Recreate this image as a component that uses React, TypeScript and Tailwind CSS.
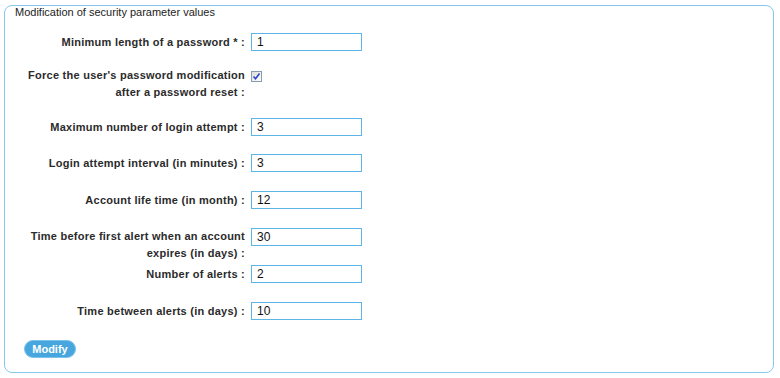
import React, { useState } from 'react';

interface Field {
  label: React.ReactNode;
  value: string;
  mt: string;
}

const font = { fontFamily: '"Liberation Sans", Arial, sans-serif' };

function CheckMark({ checked, onClick }: { checked: boolean; onClick: () => void }) {
  return (
    <button type="button" onClick={onClick} className="mt-[4px] h-[11px] w-[11px] p-0 leading-none">
      <svg width="11" height="11" viewBox="0 0 11 11">
        <defs>
          <linearGradient id="cb" x1="0" y1="0" x2="1" y2="1">
            <stop offset="0" stopColor="#dcdcd6" />
            <stop offset="1" stopColor="#ffffff" />
          </linearGradient>
        </defs>
        <rect x="0.5" y="0.5" width="10" height="10" fill="url(#cb)" stroke="#8a9bb8" />
        {checked && <path d="M2.5 5.5 L4.5 7.8 L8.5 2.5" fill="none" stroke="#2a45c8" strokeWidth="1.6" />}
      </svg>
    </button>
  );
}

export default function App() {
  const [forceReset, setForceReset] = useState(true);
  const [values, setValues] = useState<{ [key: number]: string }>({});

  const fields: Field[] = [
    { label: 'Maximum number of login attempt :', value: '3', mt: 'mt-[17px]' },
    { label: 'Login attempt interval (in minutes) :', value: '3', mt: 'mt-[18px]' },
    { label: 'Account life time (in month) :', value: '12', mt: 'mt-[19px]' },
    {
      label: (
        <>
          Time before first alert when an account
          <br />
          expires (in days) :
        </>
      ),
      value: '30',
      mt: 'mt-[19px]',
    },
    { label: 'Number of alerts :', value: '2', mt: 'mt-[3px]' },
    { label: 'Time between alerts (in days) :', value: '10', mt: 'mt-[19px]' },
  ];

  const inputCls =
    'h-[18px] w-[111px] border border-[#5db6e6] bg-white px-[5px] text-[12px] text-[#111] outline-none';
  const labelCls = 'w-[240px] shrink-0 text-right text-[11px] font-bold tracking-[0.25px] text-[#2b2b2b]';

  return (
    <div className="h-[378px] w-[780px] bg-white" style={font}>
      <div className="ml-[4px] pt-[5px]">
        <div className="flex h-[368px] w-[770px] flex-col rounded-[8px] border border-[#86c7ec]">
          {/* Title */}
          <div className="ml-[10px] text-[11px] leading-[13px] text-[#222]">Modification of security parameter values</div>

          {/* Minimum length */}
          <div className="mt-[14px] flex items-start gap-[6px]">
            <div className={`${labelCls} leading-[18px]`}>Minimum length of a password * :</div>
            <input
              className={inputCls}
              value={values[-1] ?? '1'}
              onChange={(e) => setValues((prev) => ({ ...prev, [-1]: e.target.value }))}
            />
          </div>

          {/* Force reset */}
          <div className="mt-[16px] flex items-start gap-[6px]">
            <div className={`${labelCls} leading-[17px]`}>
              Force the user's password modification
              <br />
              after a password reset :
            </div>
            <CheckMark checked={forceReset} onClick={() => setForceReset(!forceReset)} />
          </div>

          {fields.map((f, idx) => (
            <div key={idx} className={`${f.mt} flex items-start gap-[6px]`}>
              <div className={`${labelCls} ${idx === 3 ? 'leading-[17px]' : 'leading-[18px]'}`}>{f.label}</div>
              <input
                className={inputCls}
                value={values[idx] ?? f.value}
                onChange={(e) => setValues((prev) => ({ ...prev, [idx]: e.target.value }))}
              />
            </div>
          ))}

          {/* Button */}
          <div className="mt-[16px] pl-[19px]">
            <button
              type="button"
              className="h-[18px] w-[52px] rounded-full border border-[#7cc3ec] bg-[#47a6de] text-[11px] font-bold leading-[16px] text-white"
            >
              Modify
            </button>
          </div>
        </div>
      </div>
    </div>
  );
}
